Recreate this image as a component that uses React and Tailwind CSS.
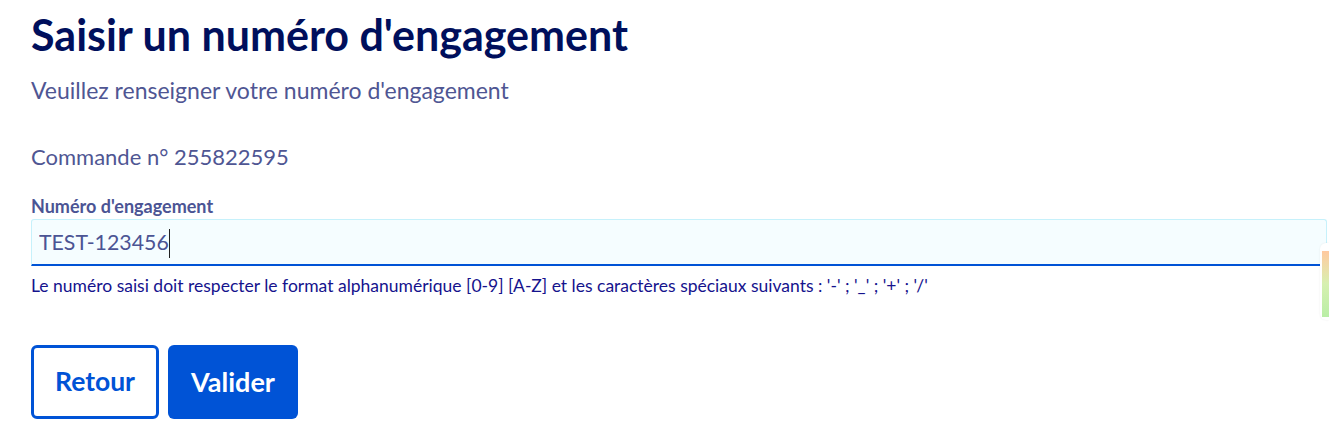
import { useState } from 'react'

export default function App() {
  const [value, setValue] = useState('TEST-123456')

  return (
    <div className="relative min-h-[447px] bg-white font-['Lato','Noto_Sans',sans-serif] overflow-hidden">
      <div className="pl-[31px] pr-[2px] pt-[11px]">
        <h1 className="text-[43px] leading-[48px] font-bold text-[#000f5c]">Saisir un numéro d'engagement</h1>
        <p className="mt-[17px] text-[23px] leading-[28px] text-[#4f5693]">Veuillez renseigner votre numéro d'engagement</p>
        <p className="mt-[39px] text-[22px] leading-[28px] text-[#4f5693]">Commande n° 255822595</p>

        <label htmlFor="engagement" className="block mt-[24px] text-[18px] leading-[22px] font-bold text-[#4b5494]">Numéro d'engagement</label>
        <div className="relative mt-[2px]">
          <input
            id="engagement"
            value={value}
            onChange={e => setValue(e.target.value)}
            className="block w-full h-[47px] px-[7px] bg-[#f5fdff] border border-[#c6f1fb] border-b-2 border-b-[#0053d6] rounded-t-[3px] text-[21.3px] text-[#4b5494] outline-none"
          />
          {/* caret as seen in the focused field */}
          <span className="absolute left-[138px] top-[10px] h-[29px] w-px bg-[#222]" />
        </div>
        <p className="mt-[9px] text-[17.5px] leading-[22px] text-[#15138d]">Le numéro saisi doit respecter le format alphanumérique [0-9] [A-Z] et les caractères spéciaux suivants : '-' ; '_' ; '+' ; '/'</p>

        <div className="flex gap-[9px] mt-[48px]">
          <button className="w-[128px] h-[74px] rounded-[6px] border-[3px] border-[#0053d6] bg-white text-[26.5px] font-bold text-[#0053d6]">Retour</button>
          <button className="w-[130px] h-[74px] rounded-[6px] bg-[#0053d6] text-[27px] font-bold text-white">Valider</button>
        </div>
      </div>

      <div className="absolute right-0 top-[243px] w-[9px] h-[77px] rounded-l-[6px] bg-white shadow-[0_0_2px_rgba(0,0,0,0.08)] pl-[2px] pt-[8px] pb-[3px]">
        <div className="w-full h-full bg-gradient-to-b from-[#ffc9a0] via-[#d6f0b0] to-[#b9eea6]" />
      </div>
    </div>
  )
}
